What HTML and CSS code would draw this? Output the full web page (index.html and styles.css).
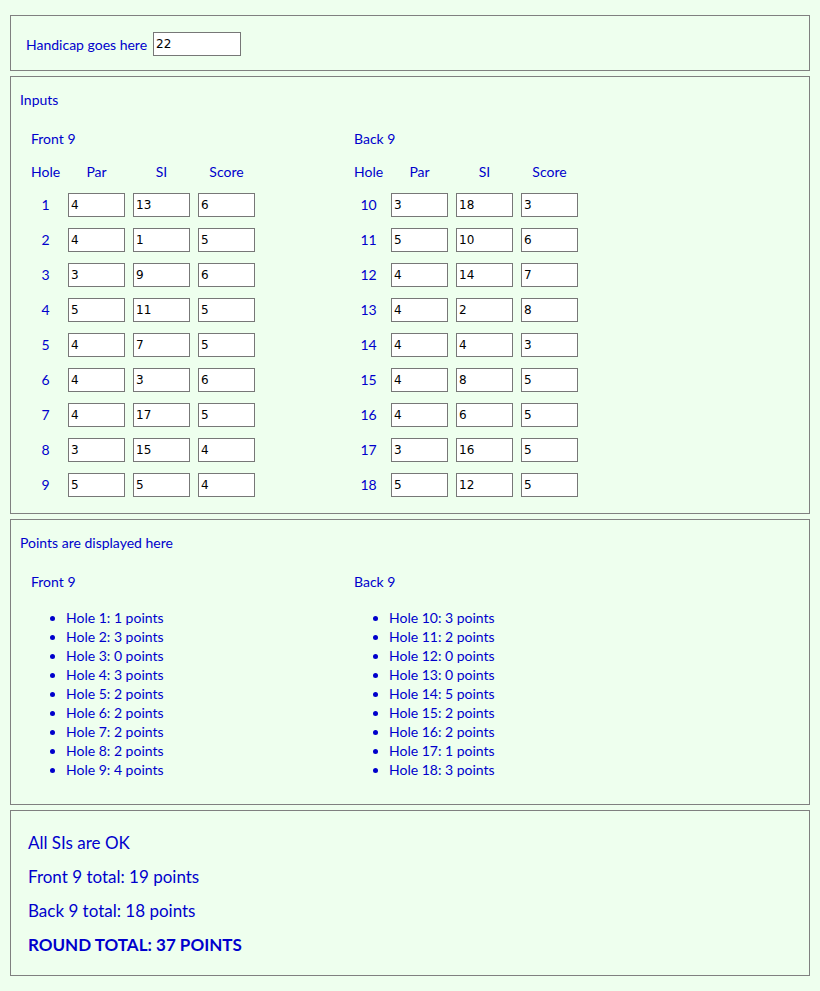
FILE: index.html
```html
<!DOCTYPE html>
<html>
<head>
<meta charset="utf-8">
<link rel="stylesheet" href="styles.css">
</head>
<body>
<div class="box handicap">
  <label class="hlabel">Handicap goes here</label>
  <input class="hinput" type="text" value="22">
</div>

<div class="box inputs">
  <div class="title">Inputs</div>
  <div class="halves">
    <div class="half">
      <div class="subtitle">Front 9</div>
      <div class="grid">
        <div class="hd">Hole</div><div class="hd">Par</div><div class="hd">SI</div><div class="hd">Score</div>
        <div class="num">1</div><input class="cell" value="4"><input class="cell" value="13"><input class="cell" value="6">
        <div class="num">2</div><input class="cell" value="4"><input class="cell" value="1"><input class="cell" value="5">
        <div class="num">3</div><input class="cell" value="3"><input class="cell" value="9"><input class="cell" value="6">
        <div class="num">4</div><input class="cell" value="5"><input class="cell" value="11"><input class="cell" value="5">
        <div class="num">5</div><input class="cell" value="4"><input class="cell" value="7"><input class="cell" value="5">
        <div class="num">6</div><input class="cell" value="4"><input class="cell" value="3"><input class="cell" value="6">
        <div class="num">7</div><input class="cell" value="4"><input class="cell" value="17"><input class="cell" value="5">
        <div class="num">8</div><input class="cell" value="3"><input class="cell" value="15"><input class="cell" value="4">
        <div class="num">9</div><input class="cell" value="5"><input class="cell" value="5"><input class="cell" value="4">
      </div>
    </div>
    <div class="half">
      <div class="subtitle">Back 9</div>
      <div class="grid">
        <div class="hd">Hole</div><div class="hd">Par</div><div class="hd">SI</div><div class="hd">Score</div>
        <div class="num">10</div><input class="cell" value="3"><input class="cell" value="18"><input class="cell" value="3">
        <div class="num">11</div><input class="cell" value="5"><input class="cell" value="10"><input class="cell" value="6">
        <div class="num">12</div><input class="cell" value="4"><input class="cell" value="14"><input class="cell" value="7">
        <div class="num">13</div><input class="cell" value="4"><input class="cell" value="2"><input class="cell" value="8">
        <div class="num">14</div><input class="cell" value="4"><input class="cell" value="4"><input class="cell" value="3">
        <div class="num">15</div><input class="cell" value="4"><input class="cell" value="8"><input class="cell" value="5">
        <div class="num">16</div><input class="cell" value="4"><input class="cell" value="6"><input class="cell" value="5">
        <div class="num">17</div><input class="cell" value="3"><input class="cell" value="16"><input class="cell" value="5">
        <div class="num">18</div><input class="cell" value="5"><input class="cell" value="12"><input class="cell" value="5">
      </div>
    </div>
  </div>
</div>

<div class="box points">
  <div class="title">Points are displayed here</div>
  <div class="halves">
    <div class="half">
      <div class="subtitle">Front 9</div>
      <ul class="plist">
        <li>Hole 1: 1 points</li>
        <li>Hole 2: 3 points</li>
        <li>Hole 3: 0 points</li>
        <li>Hole 4: 3 points</li>
        <li>Hole 5: 2 points</li>
        <li>Hole 6: 2 points</li>
        <li>Hole 7: 2 points</li>
        <li>Hole 8: 2 points</li>
        <li>Hole 9: 4 points</li>
      </ul>
    </div>
    <div class="half">
      <div class="subtitle">Back 9</div>
      <ul class="plist">
        <li>Hole 10: 3 points</li>
        <li>Hole 11: 2 points</li>
        <li>Hole 12: 0 points</li>
        <li>Hole 13: 0 points</li>
        <li>Hole 14: 5 points</li>
        <li>Hole 15: 2 points</li>
        <li>Hole 16: 2 points</li>
        <li>Hole 17: 1 points</li>
        <li>Hole 18: 3 points</li>
      </ul>
    </div>
  </div>
</div>

<div class="box totals">
  <div class="tline">All SIs are OK</div>
  <div class="tline">Front 9 total: 19 points</div>
  <div class="tline">Back 9 total: 18 points</div>
  <div class="tline strong">ROUND TOTAL: 37 POINTS</div>
</div>
</body>
</html>
```

FILE: styles.css
```css
html {
  background: #eeffee;
}
body {
  margin: 15px 10px 0 10px;
  width: 800px;
  font-family: Lato, "Open Sans", sans-serif;
  font-size: 14px;
  color: #0000cc;
}
.box {
  box-sizing: border-box;
  width: 800px;
  border: 1px solid #808080;
  margin-bottom: 5px;
}
.handicap {
  height: 56px;
  display: flex;
  align-items: center;
  padding: 2px 0 0 15px;
}
.hlabel {
  margin-right: 6px;
}
.hinput {
  box-sizing: border-box;
  width: 88px;
  height: 24px;
  border: 1px solid #777;
  padding: 1px 2px;
  font-family: "DejaVu Sans", sans-serif;
  font-size: 12px;
  color: #000;
  background: #fff;
}
.title {
  line-height: 20px;
  padding-left: 9px;
}
.inputs {
  padding-top: 13px;
  padding-bottom: 16px;
}
.halves {
  display: flex;
  padding-left: 20px;
  margin-top: 19px;
}
.half {
  width: 323px;
}
.subtitle {
  line-height: 20px;
}
.grid {
  display: grid;
  grid-template-columns: 29px 57px 57px 57px;
  grid-template-rows: 20px;
  grid-auto-rows: 24px;
  column-gap: 8px;
  row-gap: 11px;
  margin-top: 13px;
}
.hd {
  text-align: center;
  line-height: 20px;
}
.num {
  text-align: center;
  line-height: 24px;
}
.cell {
  box-sizing: border-box;
  width: 57px;
  height: 24px;
  margin: 0;
  border: 1px solid #777;
  padding: 1px 2px;
  font-family: "DejaVu Sans", sans-serif;
  font-size: 12px;
  color: #000;
  background: #fff;
}
.points {
  padding-top: 13px;
  padding-bottom: 25px;
}
.plist {
  margin: 16px 0 0 0;
  padding-left: 35px;
  list-style: disc;
}
.plist li {
  line-height: 19px;
}
.totals {
  padding: 20px 17px 18px 17px;
  font-size: 17px;
}
.tline {
  line-height: 24px;
  margin-bottom: 10px;
}
.tline:last-child {
  margin-bottom: 0;
}
.strong {
  font-weight: bold;
}
```
